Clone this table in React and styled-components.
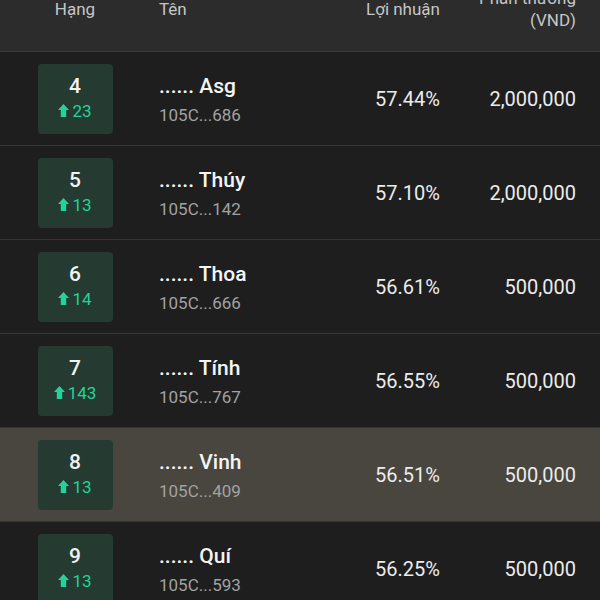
import React from 'react';
import styled, { createGlobalStyle } from 'styled-components';

const GlobalStyle = createGlobalStyle`
	html, body {
		margin: 0;
		padding: 0;
		background: #1e1e1e;
		overflow: hidden;
	}
	body {
		font-family: Roboto, 'Noto Sans', 'Liberation Sans', sans-serif;
	}
`;

const Board = styled.div`
	width: 600px;
	height: 600px;
	overflow: hidden;
	background-color: #1e1e1e;
`;

const columns = '150px 170px 120px 136px';

const Header = styled.div`
	display: grid;
	grid-template-columns: ${columns};
	align-items: center;
	margin-top: -13px;
	height: 44px;
	padding-bottom: 20px;
	padding-right: 24px;
	background-color: #2c2c2c;
	border-bottom: 1px solid #3b3b3b;
	color: #c6c6c6;
	font-size: 17px;
	line-height: 22px;
`;

const HeadCell = styled.div`
	text-align: ${(p) => p.$align || 'left'};
	padding-left: ${(p) => (p.$align === 'left' ? '9px' : '0')};
	white-space: nowrap;
`;

const Row = styled.div`
	display: grid;
	grid-template-columns: ${columns};
	align-items: center;
	height: 93px;
	padding-right: 24px;
	border-bottom: 1px solid #353535;
	background-color: ${(p) => (p.$active ? '#48463e' : '#1e1e1e')};
`;

const RankCell = styled.div`
	display: flex;
	justify-content: center;
`;

const Badge = styled.div`
	box-sizing: border-box;
	width: 75px;
	height: 70px;
	padding-top: 10px;
	border-radius: 4px;
	background-color: #253a31;
	display: flex;
	flex-direction: column;
	align-items: center;
	gap: 3px;
`;

const RankNumber = styled.div`
	color: #f2f2f2;
	font-size: 21px;
	font-weight: 500;
	line-height: 24px;
`;

const Change = styled.div`
	display: flex;
	align-items: center;
	gap: 3px;
	color: #22d39b;
	font-size: 17px;
	line-height: 20px;
`;

const NameCell = styled.div`
	padding-left: 9px;
	display: flex;
	flex-direction: column;
	gap: 6px;
	margin-top: 3px;
`;

const Name = styled.div`
	color: #f4f4f4;
	font-size: 21px;
	font-weight: 500;
	line-height: 24px;
	white-space: nowrap;
`;

const Wallet = styled.div`
	color: #a2a2a2;
	font-size: 17px;
	line-height: 22px;
`;

const Value = styled.div`
	text-align: right;
	color: #ececec;
	font-size: 20px;
	line-height: 24px;
`;

const UpArrow = () => (
	<svg width="11" height="13" viewBox="0 0 11 13">
		<path d="M5.5 0 L11 6 L8.2 6 L8.2 13 L2.8 13 L2.8 6 L0 6 Z" fill="#22d39b" />
	</svg>
);

const rows = [
	{ rank: 4, up: 23, name: 'Asg', wallet: '105C...686', profit: '57.44%', reward: '2,000,000' },
	{ rank: 5, up: 13, name: 'Thúy', wallet: '105C...142', profit: '57.10%', reward: '2,000,000' },
	{ rank: 6, up: 14, name: 'Thoa', wallet: '105C...666', profit: '56.61%', reward: '500,000' },
	{ rank: 7, up: 143, name: 'Tính', wallet: '105C...767', profit: '56.55%', reward: '500,000' },
	{ rank: 8, up: 13, name: 'Vinh', wallet: '105C...409', profit: '56.51%', reward: '500,000', active: true },
	{ rank: 9, up: 13, name: 'Quí', wallet: '105C...593', profit: '56.25%', reward: '500,000' },
];

const App = () => {
	return (
		<Board>
			<GlobalStyle />
			<Header>
				<HeadCell $align="center">Hạng</HeadCell>
				<HeadCell $align="left">Tên</HeadCell>
				<HeadCell $align="right">Lợi nhuận</HeadCell>
				<HeadCell $align="right">
					Phần thưởng
					<br />
					(VND)
				</HeadCell>
			</Header>
			{rows.map((r) => (
				<Row key={r.rank} $active={r.active}>
					<RankCell>
						<Badge>
							<RankNumber>{r.rank}</RankNumber>
							<Change>
								<UpArrow />
								{r.up}
							</Change>
						</Badge>
					</RankCell>
					<NameCell>
						<Name>...... {r.name}</Name>
						<Wallet>{r.wallet}</Wallet>
					</NameCell>
					<Value>{r.profit}</Value>
					<Value>{r.reward}</Value>
				</Row>
			))}
		</Board>
	);
};

export default App;
